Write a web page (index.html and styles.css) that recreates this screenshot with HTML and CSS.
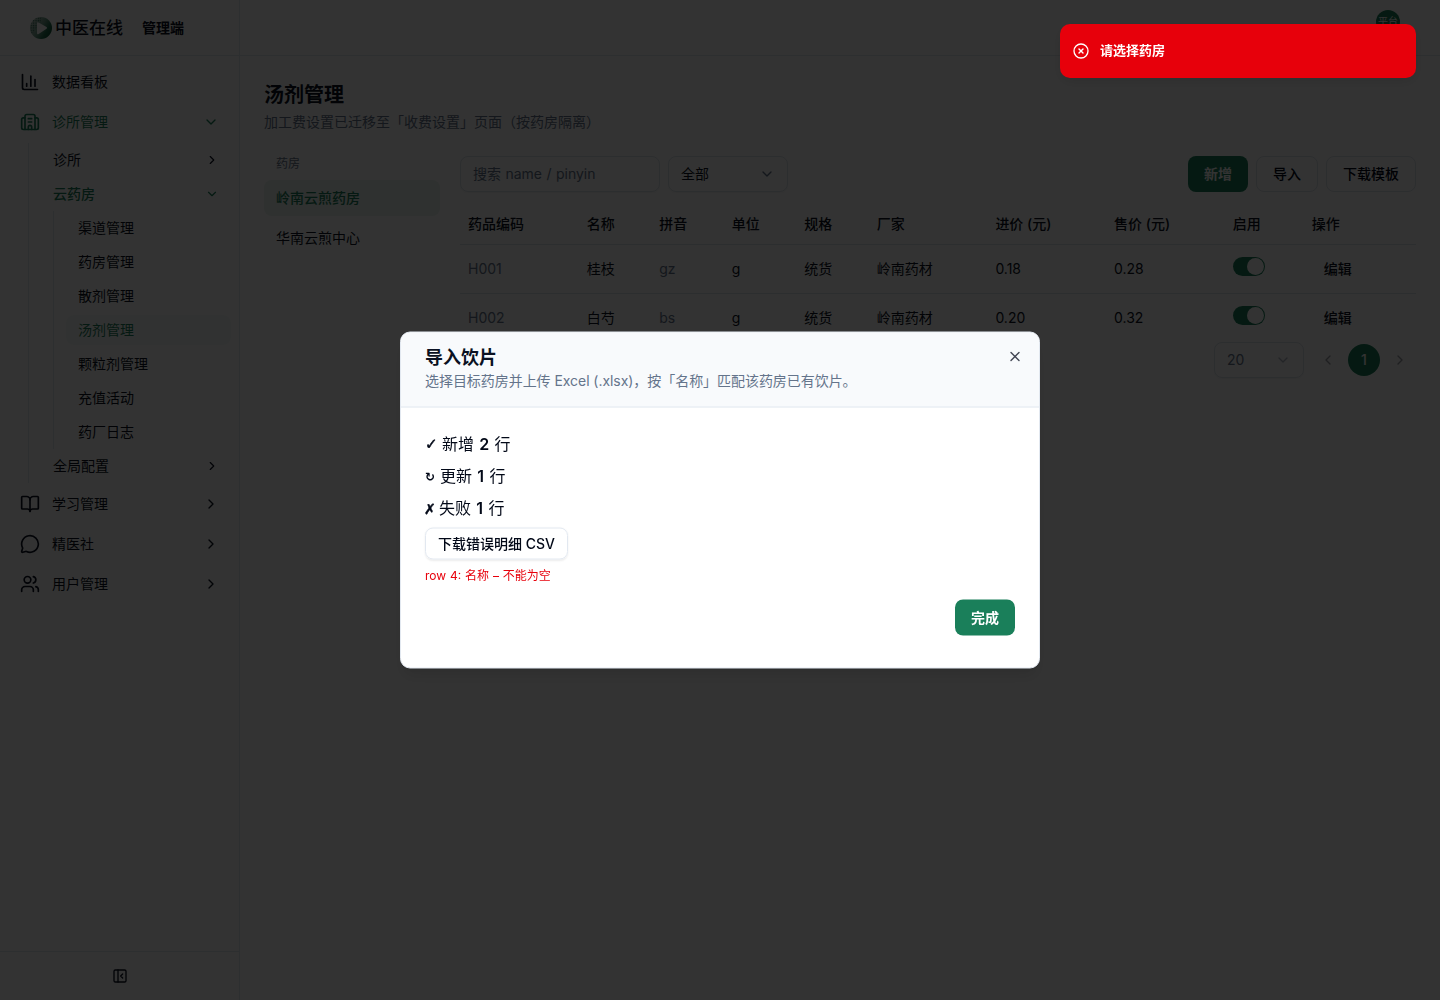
FILE: index.html
```html
<!DOCTYPE html>
<html lang="zh-CN">
<head>
    <meta charset="UTF-8">
    <meta name="viewport" content="width=device-width, initial-scale=1.0">
    <title>汤剂管理</title>
    <link rel="stylesheet" href="styles.css">
</head>
<body>

<svg class="sprite" xmlns="http://www.w3.org/2000/svg">
    <symbol id="chev-right" viewBox="0 0 24 24"><path d="m9 18 6-6-6-6"/></symbol>
    <symbol id="chev-left" viewBox="0 0 24 24"><path d="m15 18-6-6 6-6"/></symbol>
    <symbol id="chev-down" viewBox="0 0 24 24"><path d="m6 9 6 6 6-6"/></symbol>
</svg>

<div class="app">
    <aside class="sidebar">
        <div class="brand">
            <svg class="brand-logo" viewBox="0 0 22 22">
                <defs>
                    <linearGradient id="lg" x1="0" y1="0.2" x2="1" y2="0.8">
                        <stop offset="0.1" stop-color="#b9c9c1"/>
                        <stop offset="0.5" stop-color="#6a9c87"/>
                        <stop offset="0.75" stop-color="#1f6e4e"/>
                        <stop offset="1" stop-color="#0a5033"/>
                    </linearGradient>
                    <pattern id="dots" width="2.4" height="2.4" patternUnits="userSpaceOnUse">
                        <circle cx="1.2" cy="1.2" r="0.7" fill="#2f6f57"/>
                    </pattern>
                </defs>
                <circle cx="11" cy="11" r="11" fill="url(#lg)"/>
                <path d="M11 0A11 11 0 0 0 2 17L11 5Z" fill="url(#dots)"/>
                <path d="M7 6.2Q7 4.6 8.6 5.4L16.5 10Q17.6 10.8 16.5 11.8L8.6 17Q7 17.8 7 16.2Z" fill="#fff"/>
            </svg>
            <span class="brand-name">中医在线</span>
            <span class="brand-sub">管理端</span>
        </div>

        <nav class="menu">
            <a class="item">
                <svg class="icon" viewBox="0 0 24 24"><path d="M3 3v16a2 2 0 0 0 2 2h16"/><path d="M18 17V9"/><path d="M13 17V5"/><path d="M8 17v-3"/></svg>
                <span>数据看板</span>
            </a>
            <a class="item active">
                <svg class="icon" viewBox="0 0 24 24"><path d="M10 12h4"/><path d="M10 8h4"/><path d="M14 21v-3a2 2 0 0 0-4 0v3"/><path d="M6 7H4a2 2 0 0 0-2 2v10a2 2 0 0 0 2 2h16a2 2 0 0 0 2-2V9a2 2 0 0 0-2-2h-2"/><path d="M6 21V5a2 2 0 0 1 2-2h8a2 2 0 0 1 2 2v16"/></svg>
                <span>诊所管理</span>
                <svg class="chev"><use href="#chev-down"/></svg>
            </a>
            <div class="sub">
                <a class="sub-item"><span>诊所</span><svg class="chev"><use href="#chev-right"/></svg></a>
                <a class="sub-item active"><span>云药房</span><svg class="chev"><use href="#chev-down"/></svg></a>
                <div class="leaf-list">
                    <a class="leaf">渠道管理</a>
                    <a class="leaf">药房管理</a>
                    <a class="leaf">散剂管理</a>
                    <a class="leaf current">汤剂管理</a>
                    <a class="leaf">颗粒剂管理</a>
                    <a class="leaf">充值活动</a>
                    <a class="leaf">药厂日志</a>
                </div>
                <a class="sub-item"><span>全局配置</span><svg class="chev"><use href="#chev-right"/></svg></a>
            </div>
            <a class="item">
                <svg class="icon" viewBox="0 0 24 24"><path d="M12 7v14"/><path d="M3 18a1 1 0 0 1-1-1V4a1 1 0 0 1 1-1h5a4 4 0 0 1 4 4 4 4 0 0 1 4-4h5a1 1 0 0 1 1 1v13a1 1 0 0 1-1 1h-6a3 3 0 0 0-3 3 3 3 0 0 0-3-3z"/></svg>
                <span>学习管理</span>
                <svg class="chev"><use href="#chev-right"/></svg>
            </a>
            <a class="item">
                <svg class="icon" viewBox="0 0 24 24"><path d="M2.992 16.342a2 2 0 0 1 .094 1.167l-1.065 3.29a1 1 0 0 0 1.236 1.168l3.413-.998a2 2 0 0 1 1.099.092 10 10 0 1 0-4.777-4.719"/></svg>
                <span>精医社</span>
                <svg class="chev"><use href="#chev-right"/></svg>
            </a>
            <a class="item">
                <svg class="icon" viewBox="0 0 24 24"><path d="M16 21v-2a4 4 0 0 0-4-4H6a4 4 0 0 0-4 4v2"/><circle cx="9" cy="7" r="4"/><path d="M22 21v-2a4 4 0 0 0-3-3.87"/><path d="M16 3.13a4 4 0 0 1 0 7.75"/></svg>
                <span>用户管理</span>
                <svg class="chev"><use href="#chev-right"/></svg>
            </a>
        </nav>

        <div class="sidebar-footer">
            <svg class="icon-sm" viewBox="0 0 24 24"><rect width="18" height="18" x="3" y="3" rx="2"/><path d="M9 3v18"/><path d="m16 15-3-3 3-3"/></svg>
        </div>
    </aside>

    <div class="page">
        <header class="topbar">
            <span class="avatar">平台</span>
        </header>

        <main class="content">
            <h1>汤剂管理</h1>
            <p class="desc">加工费设置已迁移至「收费设置」页面（按药房隔离）</p>

            <div class="columns">
                <div class="pharmacies">
                    <div class="group-label">药房</div>
                    <a class="pharmacy selected">岭南云煎药房</a>
                    <a class="pharmacy">华南云煎中心</a>
                </div>

                <section class="list">
                    <div class="toolbar">
                        <div class="field search">搜索 name / pinyin</div>
                        <div class="field select"><span>全部</span><svg class="chev"><use href="#chev-down"/></svg></div>
                        <div class="actions">
                            <button class="btn primary">新增</button>
                            <button class="btn">导入</button>
                            <button class="btn">下载模板</button>
                        </div>
                    </div>

                    <table>
                        <colgroup>
                            <col class="c-code"><col class="c-short"><col class="c-short"><col class="c-short"><col class="c-short">
                            <col class="c-code"><col class="c-code"><col class="c-code"><col class="c-switch"><col>
                        </colgroup>
                        <thead>
                            <tr>
                                <th>药品编码</th><th>名称</th><th>拼音</th><th>单位</th><th>规格</th>
                                <th>厂家</th><th>进价 (元)</th><th>售价 (元)</th><th>启用</th><th>操作</th>
                            </tr>
                        </thead>
                        <tbody>
                            <tr>
                                <td class="muted">H001</td><td>桂枝</td><td class="muted">gz</td><td>g</td><td>统货</td>
                                <td>岭南药材</td><td>0.18</td><td>0.28</td><td><span class="switch"></span></td><td><span class="edit">编辑</span></td>
                            </tr>
                            <tr>
                                <td class="muted">H002</td><td>白芍</td><td class="muted">bs</td><td>g</td><td>统货</td>
                                <td>岭南药材</td><td>0.20</td><td>0.32</td><td><span class="switch"></span></td><td><span class="edit">编辑</span></td>
                            </tr>
                        </tbody>
                    </table>

                    <div class="pager">
                        <div class="field page-size"><span>20</span><svg class="chev"><use href="#chev-down"/></svg></div>
                        <svg class="chev arrow"><use href="#chev-left"/></svg>
                        <span class="page-no">1</span>
                        <svg class="chev arrow"><use href="#chev-right"/></svg>
                    </div>
                </section>
            </div>
        </main>
    </div>
</div>

<!-- Import dialog -->
<div class="overlay">
    <div class="dialog">
        <div class="dialog-head">
            <div>
                <h2>导入饮片</h2>
                <p>选择目标药房并上传 Excel (.xlsx)，按「名称」匹配该药房已有饮片。</p>
            </div>
            <svg class="close" viewBox="0 0 24 24"><path d="M18 6 6 18"/><path d="m6 6 12 12"/></svg>
        </div>
        <div class="dialog-body">
            <div class="result"><span class="mark added">✓</span>新增 <b>2</b> 行</div>
            <div class="result"><span class="mark updated">↻</span>更新 <b>1</b> 行</div>
            <div class="result"><span class="mark failed">✗</span>失败 <b>1</b> 行</div>
            <button class="btn small">下载错误明细 CSV</button>
            <div class="error">row 4: 名称 – 不能为空</div>
            <div class="dialog-foot">
                <button class="btn primary">完成</button>
            </div>
        </div>
    </div>
</div>

<div class="toast">
    <svg class="toast-icon" viewBox="0 0 24 24"><circle cx="12" cy="12" r="10.5"/><path d="m15 9-6 6"/><path d="m9 9 6 6"/></svg>
    <span>请选择药房</span>
</div>

</body>
</html>
```
FILE: styles.css
```css
* {
    box-sizing: border-box;
}

body {
    margin: 0;
    font-family: Inter, "Noto Sans CJK SC", sans-serif;
    font-size: 14px;
    line-height: 20px;
    color: #0a1122;
    background: #fff;
    overflow: hidden;
}

h1, h2, p {
    margin: 0;
}

svg {
    fill: none;
    stroke: currentColor;
    stroke-width: 2;
    stroke-linecap: round;
    stroke-linejoin: round;
    flex-shrink: 0;
}

.sprite {
    display: none;
}

.app {
    display: flex;
    height: 1000px;
}

/* Sidebar */
.sidebar {
    width: 240px;
    display: flex;
    flex-direction: column;
    border-right: 1px solid #e2e8f0;
}

.brand {
    height: 56px;
    display: flex;
    align-items: center;
    padding-left: 30px;
    border-bottom: 1px solid #e2e8f0;
}

.brand-logo {
    width: 22px;
    height: 22px;
    stroke: none;
}

.brand-name {
    margin-left: 3px;
    font-size: 17px;
    font-weight: 500;
}

.brand-sub {
    margin-left: 19px;
    font-weight: 600;
}

.menu {
    flex: 1;
    padding: 6px 8px;
}

.item {
    height: 40px;
    display: flex;
    align-items: center;
    gap: 12px;
    padding: 0 12px;
}

.icon {
    width: 20px;
    height: 20px;
}

.chev {
    width: 16px;
    height: 16px;
    margin-left: auto;
}

.active {
    color: #1a7f5a;
}

.sub {
    margin: 1px 0 1px 20px;
    border-left: 1px solid #e2e8f0;
}

.sub-item {
    height: 34px;
    display: flex;
    align-items: center;
    padding: 0 12px 0 24px;
}

.sub-item .chev {
    width: 14px;
    height: 14px;
}

.sub-item.active {
    font-weight: 500;
}

.leaf-list {
    display: flow-root;
    margin-left: 24px;
    border-left: 1px solid #e2e8f0;
}

.leaf {
    display: block;
    height: 30px;
    line-height: 30px;
    margin: 2px 0 2px 12px;
    padding-left: 12px;
    border-radius: 8px;
}

.leaf + .leaf {
    margin-top: 4px;
}

.leaf.current {
    color: #1a7f5a;
    background: #f6fbf9;
}

.sidebar-footer {
    height: 49px;
    display: flex;
    align-items: center;
    justify-content: center;
    border-top: 1px solid #e2e8f0;
}

.icon-sm {
    width: 16px;
    height: 16px;
}

/* Page */
.page {
    flex: 1;
}

.topbar {
    height: 56px;
    display: flex;
    justify-content: flex-end;
    padding: 10px 40px 0 0;
    border-bottom: 1px solid #e2e8f0;
}

.avatar {
    width: 24px;
    height: 24px;
    border-radius: 50%;
    background: #1a7f5a;
    color: #fff;
    font-size: 10px;
    line-height: 22px;
    text-align: center;
}

.content {
    padding: 24px;
}

h1 {
    padding-top: 2px;
    font-size: 20px;
    line-height: 26px;
    font-weight: 600;
}

.desc {
    margin-top: 4px;
    color: #64748b;
}

.columns {
    display: flex;
    gap: 20px;
    margin-top: 24px;
}

.pharmacies {
    width: 176px;
}

.group-label {
    height: 24px;
    padding: 0 12px;
    font-size: 12px;
    line-height: 16px;
    color: #64748b;
}

.pharmacy {
    display: block;
    height: 36px;
    line-height: 36px;
    margin-bottom: 4px;
    padding: 0 12px;
    border-radius: 8px;
}

.pharmacy.selected {
    color: #1a7f5a;
    background: #e8f2ee;
    font-weight: 500;
}

.list {
    flex: 1;
}

.toolbar {
    display: flex;
    gap: 8px;
    margin-bottom: 12px;
}

.field {
    height: 36px;
    display: flex;
    align-items: center;
    padding: 0 12px;
    border: 1px solid #dce3eb;
    border-radius: 8px;
    box-shadow: 0 1px 2px rgba(0, 0, 0, 0.05);
}

.search {
    width: 200px;
    color: #64748b;
    word-spacing: 0.5px;
}

.select {
    width: 120px;
}

.field .chev {
    color: #64748b;
}

.actions {
    display: flex;
    gap: 8px;
    margin-left: auto;
}

.btn {
    height: 36px;
    padding: 0 16px 2px;
    border: 1px solid #dce3eb;
    border-radius: 8px;
    background: transparent;
    color: #020817;
    font-family: inherit;
    font-size: 14px;
    font-weight: 500;
}

.btn.primary {
    border: none;
    background: #1a7f5a;
    color: #fff;
    font-weight: 600;
}

table {
    width: 100%;
    table-layout: fixed;
    border-collapse: collapse;
}

.c-code {
    width: 118.7px;
}

.c-short {
    width: 72.5px;
}

.c-switch {
    width: 79px;
}

th, td {
    padding: 0 8px;
    text-align: left;
    font-weight: 400;
}

th {
    height: 40px;
    font-weight: 500;
}

tr {
    border-bottom: 1px solid #dce3eb;
}

tbody tr:last-child {
    border-bottom: none;
}

td {
    height: 49px;
}

.muted {
    color: #64748b;
}

.switch {
    display: flex;
    width: 32px;
    height: 19px;
    margin-bottom: 5px;
    padding: 1px;
    border-radius: 10px;
    background: #1a7f5a;
    justify-content: flex-end;
}

.switch::after {
    content: "";
    width: 17px;
    height: 17px;
    border-radius: 50%;
    background: #fff;
}

.edit {
    padding-left: 12px;
    font-weight: 500;
}

.pager {
    display: flex;
    align-items: center;
    justify-content: flex-end;
    gap: 12px;
    padding-right: 8px;
}

.page-size {
    width: 90px;
    margin-right: 4px;
    color: #64748b;
}

.page-size .chev {
    opacity: 0.5;
}

.pager .arrow {
    margin: 0;
    opacity: 0.4;
}

.page-no {
    width: 32px;
    height: 32px;
    border-radius: 50%;
    background: #1a7f5a;
    color: #fff;
    font-weight: 500;
    line-height: 32px;
    text-align: center;
}

/* Dialog */
.overlay {
    position: fixed;
    inset: 0;
    background: rgba(0, 0, 0, 0.8);
}

.dialog {
    position: absolute;
    top: 50%;
    left: 50%;
    transform: translate(-50%, -50%);
    width: 640px;
    height: 337px;
    border: 1px solid #e2e8f0;
    border-radius: 10px;
    background: #fff;
    overflow: hidden;
    box-shadow: 0 10px 15px -3px rgba(0, 0, 0, 0.1), 0 4px 6px -4px rgba(0, 0, 0, 0.1);
}

.dialog-head {
    height: 75px;
    display: flex;
    justify-content: space-between;
    padding: 16px 16px 0 24px;
    background: #f8fafc;
    border-bottom: 1px solid #e2e8f0;
}

h2 {
    font-size: 18px;
    line-height: 18px;
    font-weight: 600;
}

.dialog-head p {
    margin-top: 4px;
    color: #64748b;
    letter-spacing: -0.05px;
}

.close {
    width: 16px;
    height: 16px;
    color: #414552;
}

.dialog-body {
    padding: 24px;
    color: #020817;
}

.result {
    height: 24px;
    display: flex;
    align-items: center;
    margin-bottom: 8px;
    font-size: 16px;
    line-height: 24px;
    white-space: pre;
    word-spacing: 0.8px;
}

.result b {
    font-weight: 600;
}

.mark {
    font-family: "DejaVu Sans", sans-serif;
    font-size: 15px;
    font-weight: 700;
    -webkit-text-stroke: 0.5px #020817;
}

.mark.added {
    width: 17px;
}

.mark.updated {
    width: 15px;
    padding-top: 2px;
    font-size: 12px;
    -webkit-text-stroke-width: 0;
}

.mark.failed {
    width: 14px;
    margin-left: -1px;
    margin-right: 1px;
    padding-top: 1px;
    font-size: 14px;
}

.btn.small {
    display: block;
    height: 32px;
    padding: 0 12px 2px;
    border-color: #e2e8f0;
    box-shadow: 0 1px 2px rgba(0, 0, 0, 0.08);
}

.error {
    margin-top: 8px;
    font-size: 12px;
    line-height: 16px;
    word-spacing: 0.5px;
    color: #e7000b;
}

.dialog-foot {
    display: flex;
    justify-content: flex-end;
    margin-top: 16px;
}

/* Toast */
.toast {
    position: fixed;
    top: 24px;
    right: 24px;
    width: 356px;
    height: 54px;
    display: flex;
    align-items: center;
    gap: 11px;
    padding: 0 13px;
    border-radius: 10px;
    background: #e7000b;
    color: #fff;
    font-size: 13px;
    font-weight: 600;
    box-shadow: 0 4px 12px rgba(0, 0, 0, 0.1);
}

.toast span {
    padding-bottom: 2px;
}

.toast-icon {
    width: 16px;
    height: 16px;
}
```
